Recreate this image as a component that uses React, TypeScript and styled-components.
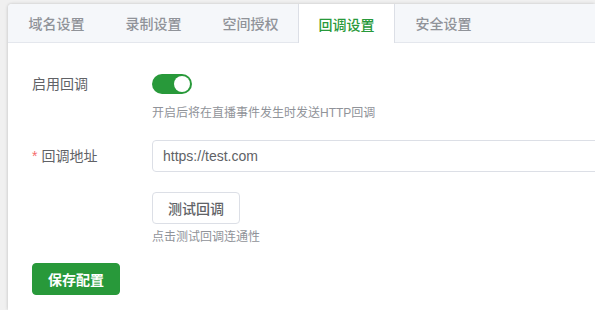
import React, { useState } from "react";
import styled, { createGlobalStyle } from "styled-components";

const GREEN = "#28993a";

const GlobalStyle = createGlobalStyle`
  html, body {
    margin: 0;
    padding: 0;
    background: #f0f0f0;
    overflow: hidden;
  }
  body {
    font-family: "Liberation Sans", "Noto Sans CJK SC", sans-serif;
  }
`;

const Page = styled.div`
  box-sizing: border-box;
  width: 595px;
  height: 310px;
  padding: 4px 0 0 8px;
  overflow: hidden;
`;

const Card = styled.div`
  background: #fff;
  border-radius: 4px 0 0 0;
  box-shadow: -1px 0 3px rgba(0, 0, 0, 0.1), 0 -1px 3px rgba(0, 0, 0, 0.06);
  height: 100%;
  overflow: hidden;
`;

const TabBar = styled.div`
  display: flex;
  height: 38px;
  background: #f5f7fa;
  border-bottom: 1px solid #e4e7ed;
`;

const Tab = styled.div<{ $active?: boolean }>`
  box-sizing: border-box;
  width: 97px;
  height: ${(p) => (p.$active ? "39px" : "38px")};
  display: flex;
  align-items: center;
  justify-content: center;
  font-size: 14px;
  font-weight: 500;
  color: ${(p) => (p.$active ? GREEN : "#909399")};
  background: ${(p) => (p.$active ? "#fff" : "transparent")};
  border-left: 1px solid ${(p) => (p.$active ? "#dcdfe6" : "transparent")};
  border-right: 1px solid ${(p) => (p.$active ? "#dcdfe6" : "transparent")};
  margin-left: ${(p) => (p.$active ? "-1px" : "0")};
  cursor: pointer;
`;

const Content = styled.div`
  padding: 31px 24px 16px;
`;

const Row = styled.div<{ $gap?: number }>`
  display: flex;
  margin-bottom: ${(p) => p.$gap ?? 20}px;
`;

const Label = styled.div<{ $h?: number }>`
  width: 120px;
  flex-shrink: 0;
  box-sizing: border-box;
  line-height: ${(p) => p.$h ?? 20}px;
  font-size: 14px;
  color: #606266;
`;

const Star = styled.span`
  color: #f56c6c;
  margin-right: 4px;
`;

const Field = styled.div`
  flex: 1;
  display: flex;
  flex-direction: column;
  align-items: flex-start;
`;

const Switch = styled.button<{ $on: boolean }>`
  position: relative;
  width: 40px;
  height: 20px;
  border: none;
  padding: 0;
  border-radius: 10px;
  background: ${(p) => (p.$on ? GREEN : "#dcdfe6")};
  cursor: pointer;

  &::after {
    content: "";
    position: absolute;
    top: 2px;
    left: ${(p) => (p.$on ? "22px" : "2px")};
    width: 16px;
    height: 16px;
    border-radius: 50%;
    background: #fff;
  }
`;

const Help = styled.div<{ $mt?: number }>`
  margin-top: ${(p) => p.$mt ?? 10}px;
  font-size: 12px;
  line-height: 18px;
  color: #909399;
`;

const Input = styled.input`
  box-sizing: border-box;
  width: calc(100% + 40px);
  height: 32px;
  padding: 0 10px;
  border: 1px solid #dcdfe6;
  border-radius: 4px;
  font-family: "Liberation Sans", "Noto Sans CJK SC", sans-serif;
  font-size: 14px;
  color: #606266;
  outline: none;
`;

const Button = styled.button<{ $primary?: boolean }>`
  box-sizing: border-box;
  width: 88px;
  height: 32px;
  border-radius: 4px;
  font-family: "Liberation Sans", "Noto Sans CJK SC", sans-serif;
  font-size: 14px;
  font-weight: ${(p) => (p.$primary ? 700 : 500)};
  color: ${(p) => (p.$primary ? "#fff" : "#606266")};
  background: ${(p) => (p.$primary ? GREEN : "#fff")};
  border: 1px solid ${(p) => (p.$primary ? GREEN : "#dcdfe6")};
  cursor: pointer;
`;

const tabs = ["域名设置", "录制设置", "空间授权", "回调设置", "安全设置"];

export default function App() {
  const [active, setActive] = useState(3);
  const [enabled, setEnabled] = useState(true);
  const [url, setUrl] = useState("https://test.com");

  return (
    <Page>
      <GlobalStyle />
      <Card>
        <TabBar>
          {tabs.map((t, i) => (
            <Tab key={t} $active={i === active} onClick={() => setActive(i)}>
              {t}
            </Tab>
          ))}
        </TabBar>
        <Content>
          <Row $gap={18}>
            <Label>启用回调</Label>
            <Field>
              <Switch $on={enabled} onClick={() => setEnabled(!enabled)} />
              <Help>开启后将在直播事件发生时发送HTTP回调</Help>
            </Field>
          </Row>
          <Row>
            <Label $h={32}>
              <Star>*</Star>回调地址
            </Label>
            <Field>
              <Input value={url} onChange={(e) => setUrl(e.target.value)} />
            </Field>
          </Row>
          <Row $gap={17}>
            <Label />
            <Field>
              <Button>测试回调</Button>
              <Help $mt={4}>点击测试回调连通性</Help>
            </Field>
          </Row>
          <Button $primary>保存配置</Button>
        </Content>
      </Card>
    </Page>
  );
}
